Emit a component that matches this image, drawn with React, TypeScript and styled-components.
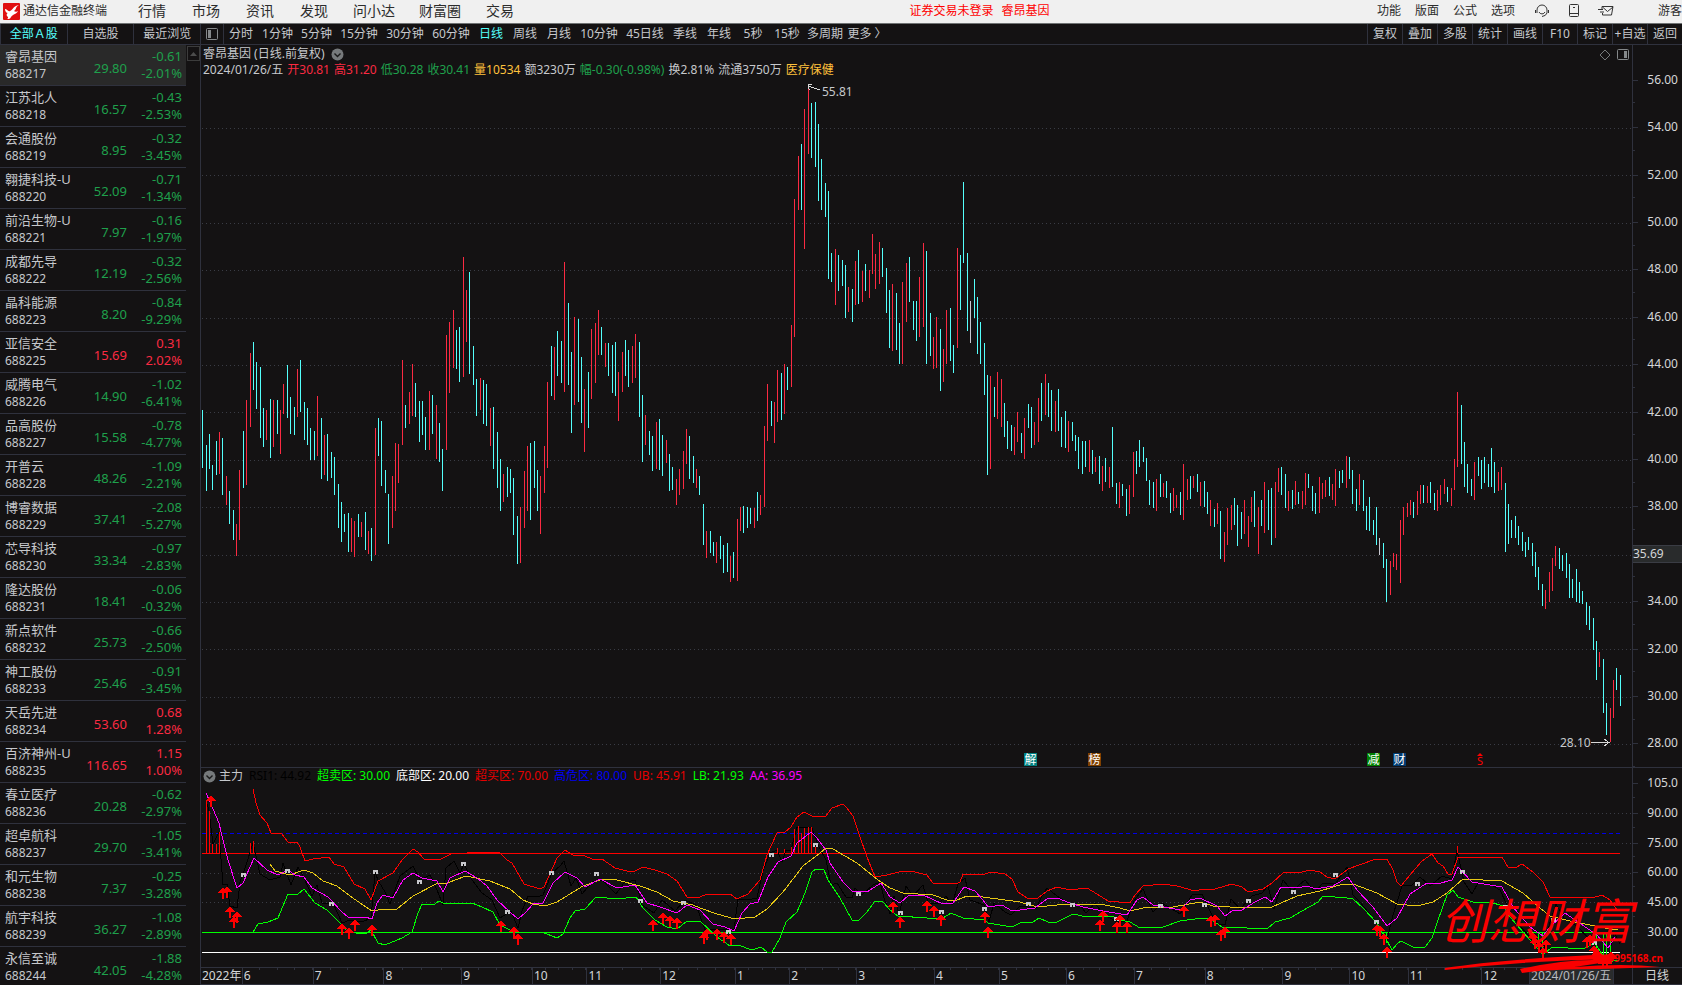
import React from "react";
import styled, { createGlobalStyle } from "styled-components";

const C = {
  bg: "#141213",
  line: "#2f313d",
  text: "#c6c8cc",
  red: "#fb2a42",
  green: "#1fa04c",
  cyan: "#54fffc",
  yellow: "#ffc13c",
};

const GlobalStyle = createGlobalStyle`
  * { box-sizing: border-box; }
  html, body { margin: 0; height: 100%; }
  body {
    overflow: hidden;
    background: ${C.bg};
    color: ${C.text};
    font: 12px/16px "Noto Sans", "Noto Sans CJK SC", sans-serif;
  }
  button {
    margin: 0; padding: 0; border: 0; background: none;
    color: inherit; font: inherit; white-space: nowrap; cursor: pointer;
  }
  svg { display: block; }
`;

const Shell = styled.div`
  display: flex;
  flex-direction: column;
  height: 100vh;
  overflow: hidden;
`;

/* ---------- top menu ---------- */
const MenuBar = styled.header`
  flex: none;
  display: flex;
  align-items: center;
  height: 24px;
  padding-bottom: 1px;
  background: #f0f0f0;
  border-bottom: 1px solid #6f7273;
  color: #2c2c2c;
`;
const Brand = styled.div`
  display: flex;
  align-items: center;
  gap: 3px;
  width: 125px;
  padding-left: 3px;
`;
const MainNav = styled.nav`
  display: flex;
  font-size: 14px;
`;
const NavItem = styled.button<{ $wide?: boolean }>`
  width: ${(p) => (p.$wide ? 66 : 54)}px;
`;
const Notice = styled.div`
  flex: 1;
  display: flex;
  justify-content: center;
  gap: 8px;
  padding-left: 62px;
  color: #ff0000;
`;
const SideNav = styled.nav`
  display: flex;
  align-items: center;
`;
const SideItem = styled.button`
  width: 38px;
`;
const IconGroup = styled.div`
  display: flex;
  margin: 0 36px 0 4px;
`;
const IconItem = styled.button`
  display: flex;
  align-items: center;
  justify-content: center;
  width: 32px;
`;

/* ---------- tool bar ---------- */
const ToolRow = styled.div`
  flex: none;
  display: flex;
  height: 21px;
  border-bottom: 1px solid ${C.line};
`;
const ListTabs = styled.div`
  display: flex;
  width: 200px;
`;
const ListTab = styled.button<{ $active?: boolean }>`
  flex: 1;
  border-left: 1px solid ${C.line};
  color: ${(p) => (p.$active ? C.cyan : "inherit")};
`;
const PaneToggle = styled.button`
  display: flex;
  align-items: center;
  justify-content: center;
  width: 24px;
  border: solid ${C.line};
  border-width: 0 1px;
`;
const Periods = styled.div`
  flex: 1;
  display: flex;
`;
const Period = styled.button<{ $w: number; $active?: boolean }>`
  width: ${(p) => p.$w}px;
  color: ${(p) => (p.$active ? C.cyan : "inherit")};
`;
const Actions = styled.div`
  display: flex;
`;
const Action = styled.button`
  width: 35px;
  border-left: 1px solid ${C.line};
`;

/* ---------- stock list ---------- */
const Body = styled.div`
  flex: 1;
  display: flex;
  min-height: 0;
`;
const ListPane = styled.aside`
  display: flex;
  align-items: flex-start;
  width: 200px;
  overflow: hidden;
`;
const Stocks = styled.table`
  width: 186px;
  border-spacing: 0;
  table-layout: fixed;
`;
const StockRow = styled.tr<{ $active?: boolean }>`
  height: 41px;
  background: ${(p) => (p.$active ? "#292929" : "transparent")};
  > * { border-bottom: 1px solid ${C.line}; }
`;
const NameCell = styled.th`
  width: 78px;
  padding: 3px 0 3px 5px;
  font-weight: 400;
  text-align: left;
  line-height: 17px;
  white-space: nowrap;
`;
const StockName = styled.div`
  font-size: 13px;
`;
const PriceCell = styled.td<{ $up?: boolean }>`
  width: 49px;
  padding: 5px 0 0;
  font-size: 13px;
  text-align: right;
  color: ${(p) => (p.$up ? C.red : C.green)};
`;
const ChangeCell = styled(PriceCell)`
  width: 59px;
  padding: 3px 4px 3px 0;
  line-height: 17px;
`;
const ScrollUp = styled.button`
  width: 13px;
  height: 15px;
  margin: 1px 0 0 1px;
  border: 1px solid #3c3c3c;
  display: flex;
  align-items: center;
  justify-content: center;
`;

/* ---------- charts ---------- */
const ChartPane = styled.main`
  position: relative;
  flex: 1;
  min-width: 0;
  display: flex;
  flex-direction: column;
  border-left: 1px solid ${C.line};
`;
const PriceBlock = styled.section`
  flex: 1;
  min-height: 0;
  display: flex;
`;
const RsiBlock = styled.section`
  flex: none;
  display: flex;
  height: 200px;
  border-top: 1px solid ${C.line};
`;
const Plot = styled.div`
  position: relative;
  flex: 1;
  min-width: 0;
  min-height: 0;
`;
const Canvas = styled.svg`
  position: absolute;
  inset: 0;
  width: 100%;
  height: 100%;
  shape-rendering: crispEdges;
`;
const Scale = styled.div<{ $top?: number; $bottom?: number }>`
  display: flex;
  flex-direction: column;
  width: 50px;
  padding: ${(p) => p.$top || 0}px 0 ${(p) => p.$bottom || 0}px;
  border-left: 1px solid ${C.line};
  color: #d4d6d8;
`;
const ScaleCell = styled.div`
  position: relative;
  flex: 1;
  display: flex;
  align-items: center;
  justify-content: flex-end;
  padding-right: 4px;
  &::before, &::after {
    content: "";
    position: absolute;
    left: 0;
    height: 1px;
    background: ${C.line};
  }
  &::before { top: 50%; width: 5px; }
  &::after { bottom: 0; width: 2px; }
`;
const Cursor = styled.div`
  position: relative;
  flex: 1;
  margin-right: -4px;
  border: solid #3a3c44;
  border-width: 1px 0;
  background: #292b2c;
  z-index: 1;
`;
const Caption = styled.div`
  position: relative;
  padding: 1px 0 0 2px;
`;
const CaptionLine = styled.div<{ $gap: number }>`
  display: flex;
  align-items: center;
  gap: ${(p) => p.$gap}px;
  white-space: nowrap;
`;
const RsiCaption = styled(Caption)`
  padding-top: 0;
`;
const Tone = styled.span<{ $c: string }>`
  color: ${(p) => p.$c};
`;
const CornerTools = styled.div`
  position: absolute;
  top: 4px;
  right: 3px;
  display: flex;
  gap: 6px;
`;
const PlotLabel = styled.span<{ $x: number; $y: number }>`
  position: absolute;
  left: ${(p) => ((p.$x - 201) / 1431) * 100}%;
  top: ${(p) => ((p.$y - 45) / 722) * 100}%;
`;
const Flag = styled.button<{ $x: number; $bg: string }>`
  position: absolute;
  bottom: 1px;
  left: ${(p) => ((p.$x - 201) / 1431) * 100}%;
  width: 13px;
  height: 13px;
  background: ${(p) => p.$bg};
  color: #fff;
  line-height: 13px;
`;
const SellFlag = styled(Flag)`
  color: #ff0000;
  font-size: 11px;
  line-height: 10px;
  width: 8px;
`;

const TimeAxis = styled.footer`
  flex: none;
  display: flex;
  height: 18px;
  border-top: 1px solid ${C.line};
  color: #d4d6d8;
`;
const Months = styled.div`
  flex: 1;
  display: flex;
  min-width: 0;
  height: 17px;
  border-bottom: 1px solid ${C.line};
`;
const Month = styled.div<{ $span: number; $first?: boolean }>`
  flex: ${(p) => p.$span} ${(p) => p.$span} 0;
  min-width: 0;
  padding-left: 1px;
  border-left: ${(p) => (p.$first ? 0 : 1)}px solid ${C.line};
  white-space: nowrap;
  background: ${(p) =>
    p.$span > 45 && p.$span < 80
      ? `repeating-linear-gradient(90deg, transparent 0, transparent calc(25% - 1px), ${C.line} calc(25% - 1px), ${C.line} 25%) top / 100% 2px no-repeat`
      : "none"};
`;
const Today = styled(Month)`
  background: #292b2c;
  color: #b9bcc0;
`;
const PeriodName = styled.div`
  width: 50px;
  height: 17px;
  padding-left: 12px;
  border-left: 1px solid ${C.line};
  border-bottom: 1px solid ${C.line};
`;

const Watermark = styled.div`
  position: absolute;
  right: 0;
  bottom: 6px;
  width: 240px;
  color: #fb0000;
  pointer-events: none;
`;
const WatermarkName = styled.div`
  margin-left: -2px;
  padding-bottom: 27px;
  font: italic 400 48px/68px "Noto Sans CJK SC", sans-serif;
  white-space: nowrap;
`;
const WatermarkSite = styled.div`
  position: absolute;
  right: 19px;
  bottom: 15px;
  font-weight: 700;
  font-size: 10px;
  line-height: 12px;
`;
const Swoosh = styled.svg`
  position: absolute;
  left: 0;
  bottom: 0;
`;

/* ---------- data ---------- */
const periods: [string, number][] = [
  ["分时", 34], ["1分钟", 39], ["5分钟", 39], ["15分钟", 46], ["30分钟", 46], ["60分钟", 46],
  ["日线", 34], ["周线", 34], ["月线", 34], ["10分钟", 46], ["45日线", 46], ["季线", 34],
  ["年线", 34], ["5秒", 34], ["15秒", 34], ["多周期", 42], ["更多 〉", 42],
];
const actions = ["复权", "叠加", "多股", "统计", "画线", "F10", "标记", "+自选", "返回"];

const stocks = `睿昂基因 688217 29.80 -0.61 -2.01%
江苏北人 688218 16.57 -0.43 -2.53%
会通股份 688219 8.95 -0.32 -3.45%
翱捷科技-U 688220 52.09 -0.71 -1.34%
前沿生物-U 688221 7.97 -0.16 -1.97%
成都先导 688222 12.19 -0.32 -2.56%
晶科能源 688223 8.20 -0.84 -9.29%
亚信安全 688225 15.69 0.31 2.02%
威腾电气 688226 14.90 -1.02 -6.41%
品高股份 688227 15.58 -0.78 -4.77%
开普云 688228 48.26 -1.09 -2.21%
博睿数据 688229 37.41 -2.08 -5.27%
芯导科技 688230 33.34 -0.97 -2.83%
隆达股份 688231 18.41 -0.06 -0.32%
新点软件 688232 25.73 -0.66 -2.50%
神工股份 688233 25.46 -0.91 -3.45%
天岳先进 688234 53.60 0.68 1.28%
百济神州-U 688235 116.65 1.15 1.00%
春立医疗 688236 20.28 -0.62 -2.97%
超卓航科 688237 29.70 -1.05 -3.41%
和元生物 688238 7.37 -0.25 -3.28%
航宇科技 688239 36.27 -1.08 -2.89%
永信至诚 688244 42.05 -1.88 -4.28%`
  .split("\n")
  .map((row) => row.split(" "));

// One entry per trading day: x, direction (c down, r up, w flat), high-low.
const bars = `202c410-468 206c445-491 209c434-469 212c465-490 216c441-475 219r432-474 222c438-495 226r476-505 229c491-524 233c510-540 236r524-556 239r470-540 243c431-488 246r400-485 250r353-427 253c342-390 256c362-409 260c367-438 263c408-447 266r410-440 270c399-458 273r400-447 277c400-434 280r410-454 283r384-414 287c365-418 290c397-434 294c407-435 297r369-417 300c360-412 304c402-440 307c408-445 310c428-460 314c431-460 317r396-456 321c418-479 324r435-475 327c434-481 331c452-478 334c457-495 338c484-528 341c502-542 344c514-532 348c513-552 351r518-552 354r521-557 358c514-537 361r522-537 365c512-550 368r531-554 371c528-561 375r428-555 378c418-456 381c421-486 385c470-493 388c494-544 392r476-528 395r443-511 398r444-483 402r360-445 405c405-428 409r392-424 412r364-416 415c383-417 419c401-442 422c401-435 425c417-450 429r391-450 432c395-434 436r405-459 439c423-462 442c449-491
446r335-450 449r322-393 453r310-368 456c330-369 459c327-382 463r257-377 466r290-342 469c272-374 473c346-385 476c379-416 480r378-410 483c380-424 486c384-426 490r408-446 493c407-469 497c432-488 500c459-511 503r474-502 507c467-497 510c469-493 513c478-535 517c516-564 520r507-563 524r471-528 527r446-511 530c443-520 534c441-488 537c470-511 540r476-534 544r446-493 547r382-468 551c346-396 554r347-400 557c331-376 561c341-383 564r262-392 568c303-385 571c352-433 574r317-405 578c319-402 581c357-423 584r389-452 588c372-428 591r329-399 595r323-383 598r310-355 601c327-355 605r343-367 608c343-376 612c345-393 615c342-396 618r372-421 622r352-392 625c340-376 628c350-387 632r346-383 635r334-378 639c342-417 642c395-462 645r415-445 649c431-455 652c436-471 656r422-469 659c419-470 662c435-476 666r440-463 669c454-491 672c467-490 676r479-505 679r469-495 683r451-489 686r429-464 689c436-479 693c456-483 696r469-488 699c476-495 703c504-545 706r531-558 710c531-553 713c542-556 716r542-563 720c536-559 723c545-573 727c543-572 730r556-582 733c552-578 737r519-581 740r507-531 743c506-533 747c507-528 750c508-524 754r508-528 757c492-521 760r495-515 764r426-507 767r384-441 771c401-426 774r402-443 777r370-422 781c373-420 784r364-414 787c367-390
791r325-387 794r199-337 798r156-210 801c144-210 804r109-249 808r87-154 811c103-158 815c102-167 818c124-201 821c159-210 825c183-217 828c191-279 831c253-282 835r249-305 838c255-291 842c260-286 845c265-318 848r287-312 852c289-322 855r261-305 858c250-304 862r271-302 865c264-291 869r270-298 872r234-274 875r254-289 879r242-284 882c248-277 886c268-313 889c290-348 892r284-351 896c293-350 899c323-364 902r282-364 906r263-322 909c257-302 913c301-330 916c301-341 919r277-337 923r243-327 926c251-364 930c313-356 933r337-369 936r317-368 940c329-391 943r349-382 946r310-364 950c308-361 953c345-373 957r248-348 960c255-310 963c182-263 967c253-331 970w301-343 974c279-318 977c297-354 980c322-364 984c343-395 987c375-475 990r376-469 994c387-417 997r372-419 1001r379-427 1004c403-437 1007c421-449 1011c425-451 1014r427-455 1017r412-442 1021c433-453 1024r418-459 1028c404-428 1031c407-448 1034r422-445 1038r398-442 1041c383-421 1045r374-415 1048c383-417 1051c390-431 1055r401-432 1058c389-431 1061c417-447 1065c411-448 1068r421-452 1072c422-441 1075c435-451 1078c437-469 1082c441-474 1085c441-467 1089r440-472 1092c450-474 1095r457-472
1099c456-484 1102r466-491 1105c458-482 1109r467-488 1112c427-487 1116c483-504 1119r482-508 1122c484-496 1126c489-516 1129r485-514 1133r452-497 1136c451-474 1139c440-467 1143c447-462 1146c458-481 1149c480-505 1153c482-508 1156r479-511 1160c474-497 1163r483-497 1166c481-498 1170c493-513 1173r488-511 1176r495-508 1180c492-515 1183r464-520 1187r479-500 1190c476-499 1193r476-488 1197c474-492 1200r482-506 1204c481-507 1207c492-514 1210r500-526 1214c509-527 1217r503-524 1220c511-559 1224r532-562 1227r508-545 1231r505-530 1234c498-525 1237c505-546 1241c512-539 1244r500-534 1248r516-547 1251r497-522 1254c491-527 1258r507-554 1261c500-526 1264r482-533 1268c490-530 1271c488-545 1275r482-538 1278r468-492 1281c467-495 1285c474-508 1288r491-511 1292c490-509 1295r481-505 1298c492-504 1302r491-509 1305r473-505 1308c474-488 1312c486-511 1315c493-514 1319r477-513 1322r483-499 1325r480-497 1329c477-496 1332r484-500 1335r469-506 1339c471-488 1342c470-483 1346r456-488 1349c457-479 1352c470-504 1356c489-511 1359r474-505 1363c480-511 1366c506-530 1369c497-531
1373c520-535 1376c507-545 1379w538-555 1383c543-568 1386c559-602 1390r561-595 1393r553-567 1396r554-570 1400r520-583 1403r507-535 1407r503-517 1410r500-515 1413c502-518 1417r491-515 1420r485-504 1423c485-503 1427r486-503 1430c482-503 1434c493-510 1437r490-511 1440r485-505 1444r479-494 1447c487-502 1451r488-506 1454r459-490 1457r392-467 1461c405-464 1464c442-487 1467c464-493 1471c479-496 1474r462-500 1478c457-476 1481c460-489 1484c457-483 1488c464-487 1491c448-487 1494c462-493 1498r472-491 1501r467-490 1505c483-552 1508c504-544 1511c520-538 1515c516-538 1518c526-545 1522c532-551 1525c542-557 1528c537-550 1532c543-566 1535c552-577 1538c567-590 1542c584-606 1545r590-609 1549r572-602 1552r558-591 1555r546-566 1559c548-569 1562c555-571 1566c553-578 1569c564-598 1572c579-598 1576c569-602 1579c582-603 1582c591-604 1586c602-625 1589c606-630 1593c618-650 1596c641-680 1599r652-667 1603c659-713 1606c703-735 1610r708-742 1613r680-718 1616c668-690 1620c675-706`
  .split(/\s+/)
  .map((s) => s.match(/(\d+)([crw])(\d+)-(\d+)/) as RegExpMatchArray);

const barPath = (kind: string) =>
  bars.filter((b) => b[2] === kind).map((b) => `M${b[1]}.5 ${b[3]}V${b[4]}`).join("");

const priceGrid = [128, 175, 223, 270, 318, 365, 412, 460, 507, 555, 602, 649, 697, 744];
const rsiGrid = [813, 843, 873, 902];

const upperBand = "253,789 256,803 260,815 267,823 271,833 281,833 288,842 297,842 300,847 305,861 313,859 329,857 334,864 344,867 354,884 365,889 371,900 378,881 393,873 402,860 413,849 418,852 424,859 439,860 453,853 467,853 499,852 507,860 512,863 524,884 540,889 544,887 557,858 565,850 573,855 585,856 592,859 602,859 615,868 627,871 635,871 643,867 655,870 667,874 677,881 687,897 700,897 707,894 730,894 737,899 748,894 760,880 767,855 777,833 785,832 791,827 797,817 804,812 812,816 826,816 832,808 843,804 847,808 853,816 860,837 867,857 875,877 887,875 903,871 915,872 927,875 933,883 947,883 956,884 960,882 963,874 983,875 990,872 1005,874 1012,879 1018,892 1027,898 1038,898 1047,891 1057,887 1070,890 1087,888 1097,894 1108,901 1130,903 1135,895 1143,886 1163,884 1177,886 1195,891 1203,889 1215,889 1232,884 1242,887 1248,892 1263,889 1272,883 1283,873 1302,872 1310,870 1320,872 1327,877 1335,879 1348,869 1373,860 1387,859 1393,870 1397,882 1401,886 1410,875 1422,861 1432,854 1438,863 1443,866 1448,874 1452,874 1458,857 1502,857 1508,867 1517,867 1522,864 1533,872 1543,882 1550,897 1580,897 1592,898 1602,895 1610,900 1617,910";
const midBand = "270,864 275,871 290,875 304,870 313,873 323,881 337,886 350,896 363,905 372,911 385,909 397,909 413,896 438,883 447,883 466,876 490,881 510,889 523,900 533,904 545,906 557,902 583,886 603,879 617,880 640,886 657,892 673,901 693,905 700,908 717,914 735,919 755,917 767,909 783,892 803,866 820,853 826,848 833,849 857,863 878,880 890,888 903,893 933,895 947,900 957,900 967,896 983,897 1020,902 1037,907 1067,904 1100,904 1120,908 1130,911 1143,908 1173,907 1200,902 1213,906 1230,907 1272,907 1297,896 1320,891 1343,884 1353,884 1377,893 1397,904 1417,906 1433,902 1447,893 1463,879 1502,881 1523,893 1540,908 1550,916 1570,921 1590,925 1610,929 1618,929";
const lowerBand = "253,932 258,924 268,922 278,918 288,894 298,894 304,889 315,903 327,910 340,923 348,932 365,934 371,930 378,943 385,945 402,938 412,932 418,913 422,904 435,904 439,901 443,903 472,903 482,907 493,912 500,925 508,929 517,933 542,932 557,938 563,934 570,918 575,911 585,909 596,897 617,899 636,897 643,908 655,920 667,927 677,929 687,921 700,921 717,937 730,946 738,945 752,950 761,947 767,952 772,952 780,938 786,922 797,912 805,893 812,872 816,869 824,870 828,880 840,898 852,920 858,921 867,912 875,901 883,902 890,910 898,916 927,918 943,918 951,913 963,918 985,920 988,923 1012,927 1022,922 1033,922 1039,918 1048,922 1057,922 1073,914 1087,917 1112,916 1120,920 1130,922 1140,928 1163,927 1180,921 1195,919 1205,918 1212,920 1222,927 1247,928 1267,929 1275,922 1290,918 1302,911 1318,902 1323,896 1347,898 1353,899 1363,908 1377,923 1385,937 1392,950 1397,944 1401,941 1413,947 1425,947 1432,938 1437,923 1447,895 1453,890 1458,897 1473,902 1490,902 1503,906 1510,917 1530,940 1543,955 1552,947 1583,949 1595,943 1607,962 1619,960";
const average = "206,793 210,802 219,823 221,832 228,860 237,888 243,883 254,858 267,870 278,875 288,870 295,875 304,877 312,888 328,897 342,912 348,917 365,917 372,919 377,903 383,895 393,898 403,880 413,873 422,878 437,881 443,892 450,878 465,871 477,878 487,886 497,900 510,912 518,919 525,913 533,904 543,903 553,883 565,872 577,878 585,887 600,879 617,888 635,885 647,903 660,907 677,913 687,905 700,910 713,924 725,927 734,931 742,913 750,904 758,902 768,877 778,862 791,856 797,843 811,832 817,838 826,850 830,863 843,882 852,891 867,892 881,883 890,897 900,903 908,896 923,895 943,904 953,903 964,887 975,891 983,900 988,907 1002,905 1012,911 1035,908 1048,898 1057,898 1070,903 1083,907 1103,911 1127,915 1137,900 1143,897 1153,905 1180,910 1190,900 1200,898 1217,906 1225,916 1232,911 1242,910 1255,902 1265,897 1272,902 1281,887 1297,888 1308,886 1315,889 1333,886 1348,877 1357,890 1373,907 1387,926 1397,918 1410,894 1427,883 1437,884 1452,880 1458,867 1472,882 1502,887 1513,907 1530,927 1543,936 1550,927 1565,913 1578,922 1597,935 1608,948 1615,937";
const rsi = "206,800 209,811 213,844 219,832 223,885 227,884 230,906 237,908 240,882 246,865 253,843 260,874 270,880 280,877 283,863 291,885 298,867 304,878 312,896 317,885 322,903 333,903 342,923 350,920 362,922 371,918 375,873 379,882 385,892 390,904 400,876 408,870 413,866 420,880 430,875 437,890 443,905 446,868 454,861 460,873 464,864 472,880 482,893 492,900 500,918 511,911 518,928 522,911 528,896 537,897 543,895 552,873 560,866 564,861 571,886 576,878 582,894 592,882 602,880 616,894 624,883 635,880 642,905 654,913 662,900 675,911 685,900 696,905 705,930 722,929 734,930 738,899 748,900 757,898 763,871 770,853 777,850 782,862 786,850 791,850 797,827 812,828 818,845 826,860 831,885 837,883 846,897 852,898 855,888 862,895 873,885 880,882 884,898 890,914 894,896 899,914 906,886 913,896 923,885 928,903 938,904 946,896 952,905 958,884 965,878 970,900 984,905 989,922 994,903 1005,912 1011,915 1020,906 1036,908 1042,896 1047,888 1057,896 1068,903 1080,905 1086,913 1095,903 1103,914 1117,922 1127,921 1134,901 1143,889 1153,912 1162,903 1180,914 1192,895 1202,894 1212,915 1218,924 1225,925 1231,899 1240,909 1252,896 1262,893 1268,886 1274,909 1283,880 1292,891 1305,880 1315,892 1322,884 1336,883 1347,867 1353,895 1360,902 1368,912 1377,924 1387,940 1393,915 1402,886 1412,885 1420,877 1430,886 1442,876 1452,879 1457,850 1464,882 1472,894 1478,883 1490,884 1500,890 1508,907 1518,924 1530,937 1543,952 1550,922 1556,904 1564,918 1578,927 1590,940 1598,952 1608,960 1614,932 1620,944";

const overbought: [number, number][] = [[206, 800], [209, 811], [212, 844], [216, 844], [219, 832], [250, 843], [253, 841], [777, 848], [784, 849], [791, 847], [794, 829], [798, 826], [801, 833], [804, 828], [808, 827], [811, 827], [815, 847], [1457, 846]];
const oversold: [number, number][] = [[1386, 943], [1538, 950], [1542, 957], [1593, 945], [1596, 955], [1603, 958], [1606, 962], [1610, 955]];
const arrows: [number, number][] = [[211, 795], [223, 887], [227, 886], [230, 906], [234, 916], [237, 911], [342, 923], [349, 927], [355, 919], [372, 924], [501, 920], [514, 926], [518, 933], [653, 919], [663, 912], [670, 915], [677, 917], [704, 932], [707, 928], [717, 928], [724, 931], [731, 933], [893, 901], [900, 916], [927, 900], [934, 905], [941, 914], [985, 911], [988, 926], [1100, 919], [1103, 910], [1117, 921], [1120, 914], [1127, 921], [1184, 905], [1211, 915], [1215, 914], [1221, 929], [1225, 926], [1377, 924], [1380, 925], [1384, 933], [1387, 946], [1533, 932], [1535, 937], [1539, 941], [1543, 947], [1546, 939], [1587, 936], [1590, 934], [1594, 945], [1597, 949], [1603, 958], [1607, 958], [1611, 951]];
const marks: [number, number][] = [[243, 875], [287, 871], [331, 904], [375, 872], [419, 882], [463, 864], [507, 912], [551, 873], [596, 874], [640, 901], [683, 903], [728, 932], [771, 855], [815, 845], [858, 894], [900, 913], [941, 912], [984, 909], [1028, 904], [1072, 905], [1116, 919], [1160, 906], [1204, 905], [1248, 901], [1293, 892], [1335, 875], [1376, 922], [1417, 884], [1462, 872], [1505, 907], [1553, 920], [1594, 943]];

const priceScale = ["56.00", "54.00", "52.00", "50.00", "48.00", "46.00", "44.00", "42.00", "40.00", "38.00", "cursor", "34.00", "32.00", "30.00", "28.00"];
const rsiScale = ["105.0", "90.00", "75.00", "60.00", "45.00", "30.00"];
const months: [string, number][] = [["6", 71], ["7", 71], ["8", 78], ["9", 71], ["10", 54], ["11", 74], ["12", 75], ["1", 54], ["2", 67], ["3", 78], ["4", 65], ["5", 67], ["6", 68], ["7", 71], ["8", 78], ["9", 67], ["10", 58], ["11", 74], ["12", 47]];

const ExpandDot = () => (
  <svg width="13" height="13" viewBox="0 0 13 13" aria-hidden="true">
    <circle cx="6.5" cy="6.5" r="6" fill="#76797b" />
    <path d="M3.5 5.5l3 3 3-3" fill="none" stroke="#1a1a1a" strokeWidth="1.4" />
  </svg>
);

const Logo = () => (
  <svg width="17" height="17" viewBox="0 0 17 17" aria-hidden="true">
    <rect width="17" height="17" rx="1" fill="#e00f10" />
    <path d="M2 6c2 0 3 3 5 2 3-1 3-5 9-6-4 2-2 4-5 6 1 1 3 1 4 0-1 3-5 3-7 6-1 2-2 2-4 2 2-1 1-2 0-3s0-3 1-3C3 10 2 8 2 6z" fill="#fff" />
  </svg>
);

function StockList() {
  return (
    <ListPane>
      <Stocks>
        <tbody>
          {stocks.map(([name, code, price, diff, pct], i) => {
            const up = !diff.startsWith("-");
            return (
              <StockRow key={code} $active={i === 0}>
                <NameCell scope="row">
                  <StockName>{name}</StockName>
                  <div>{code}</div>
                </NameCell>
                <PriceCell $up={up}>{price}</PriceCell>
                <ChangeCell $up={up}>
                  <div>{diff}</div>
                  <div>{pct}</div>
                </ChangeCell>
              </StockRow>
            );
          })}
        </tbody>
      </Stocks>
      <ScrollUp aria-label="向上滚动">
        <svg width="7" height="4" viewBox="0 0 7 4"><path d="M0 4l3.5-4L7 4z" fill="#4c4c4c" /></svg>
      </ScrollUp>
    </ListPane>
  );
}

function PriceChart() {
  return (
    <PriceBlock>
      <Plot>
        <Canvas viewBox="201 45 1431 722" preserveAspectRatio="none">
          {priceGrid.map((y) => (
            <path key={y} d={`M202 ${y}.5H1631`} stroke="#3a3c45" strokeDasharray="1 3" />
          ))}
          <path d={barPath("c")} stroke={C.cyan} />
          <path d={barPath("r")} stroke={C.red} />
          <path d={barPath("w")} stroke="#c8c8d0" />
          <g fill="none" stroke="#d8d8d8">
            <path d="M808 86l12 4M808 84.500h4M808 84v4l2 2" />
            <path d="M1591 742.500h18M1604 739l5 3.500-5 3.500" />
          </g>
        </Canvas>
        <Caption>
          <CaptionLine $gap={6}>
            <span>睿昂基因 (日线.前复权)</span>
            <ExpandDot />
          </CaptionLine>
          <CaptionLine $gap={4}>
            <span>2024/01/26/五</span>
            <Tone $c={C.red}>开30.81</Tone>
            <Tone $c={C.red}>高31.20</Tone>
            <Tone $c={C.green}>低30.28</Tone>
            <Tone $c={C.green}>收30.41</Tone>
            <Tone $c={C.yellow}>量10534</Tone>
            <span>额3230万</span>
            <Tone $c={C.green}>幅-0.30(-0.98%)</Tone>
            <span>换2.81%</span>
            <span>流通3750万</span>
            <Tone $c={C.yellow}>医疗保健</Tone>
          </CaptionLine>
        </Caption>
        <CornerTools>
          <button aria-label="标记">
            <svg width="12" height="12" viewBox="0 0 12 12"><path d="M6 1l5 5-5 5-5-5z" fill="none" stroke="#76797b" /></svg>
          </button>
          <button aria-label="侧栏">
            <svg width="12" height="12" viewBox="0 0 12 12">
              <rect x=".5" y=".5" width="11" height="10" rx="1" fill="none" stroke="#85888a" />
              <rect x="7" y="2" width="3" height="7" fill="#85888a" />
            </svg>
          </button>
        </CornerTools>
        <PlotLabel $x={822} $y={84}>55.81</PlotLabel>
        <PlotLabel $x={1560} $y={735}>28.10</PlotLabel>
        <Flag $x={1024} $bg="#008080">解</Flag>
        <Flag $x={1088} $bg="#804000">榜</Flag>
        <Flag $x={1367} $bg="#008000">减</Flag>
        <Flag $x={1393} $bg="#003a70">财</Flag>
        <SellFlag $x={1476} $bg="transparent">
          <svg width="8" height="3" viewBox="0 0 8 3"><path d="M4 0l3 3H1z" fill="#f00" /></svg>
          S
        </SellFlag>
      </Plot>
      <Scale $top={11}>
        {priceScale.map((v) => (
          <ScaleCell key={v}>{v === "cursor" ? <Cursor>35.69</Cursor> : v}</ScaleCell>
        ))}
      </Scale>
    </PriceBlock>
  );
}

function RsiChart() {
  return (
    <RsiBlock>
      <Plot>
        <Canvas viewBox="201 768 1431 199" preserveAspectRatio="none">
          {rsiGrid.map((y) => (
            <path key={y} d={`M202 ${y}.5H1631`} stroke="#3a3c45" strokeDasharray="1 3" />
          ))}
          <path d="M202 833.500H1620" stroke="#0000e8" strokeDasharray="4 3" />
          <path d="M202 853.500H1620" stroke="#ff0000" />
          <path d="M202 932.500H1620" stroke="#00ff00" />
          <path d="M202 952.500H1620" stroke="#ffffff" />
          <g fill="none">
            <polyline points={rsi} stroke="#000" />
            <polyline points={upperBand} stroke="#ff0000" />
            <polyline points={midBand} stroke="#e8c814" />
            <polyline points={lowerBand} stroke="#00ff00" />
            <path d={overbought.map(([x, y]) => `M${x}.5 ${y}V853`).join("")} stroke="#ff0000" />
            <path d={oversold.map(([x, y]) => `M${x}.5 932V${y}`).join("")} stroke="#00ff00" />
            <polyline points={average} stroke="#ff00ff" />
          </g>
          <path d={marks.map(([x, y]) => `M${x - 2} ${y + 2}v-4h5v4h-2v-2h-1v2z`).join("")} fill="#c8c8cc" />
          <path d={arrows.map(([x, y]) => `M${x} ${y}l5 6h-4v6h-2v-6h-4z`).join("")} fill="#ff0000" />
        </Canvas>
        <RsiCaption>
          <CaptionLine $gap={6}>
            <CaptionLine $gap={3}>
              <ExpandDot />
              <span>主力</span>
            </CaptionLine>
            <Tone $c="#000">RSI1: 44.92</Tone>
            <Tone $c="#00ff00">超卖区: 30.00</Tone>
            <Tone $c="#ffffff">底部区: 20.00</Tone>
            <Tone $c="#e60000">超买区: 70.00</Tone>
            <Tone $c="#0000f0">高危区: 80.00</Tone>
            <Tone $c="#e60000">UB: 45.91</Tone>
            <Tone $c="#00ff00">LB: 21.93</Tone>
            <Tone $c="#ff00ff">AA: 36.95</Tone>
          </CaptionLine>
        </RsiCaption>
      </Plot>
      <Scale $bottom={20}>
        {rsiScale.map((v) => <ScaleCell key={v}>{v}</ScaleCell>)}
      </Scale>
    </RsiBlock>
  );
}

export default function App() {
  return (
    <Shell>
      <GlobalStyle />
      <MenuBar>
        <Brand><Logo /><span>通达信金融终端</span></Brand>
        <MainNav>
          {["行情", "市场", "资讯", "发现", "问小达", "财富圈", "交易"].map((t) => (
            <NavItem key={t} $wide={t.length > 2}>{t}</NavItem>
          ))}
        </MainNav>
        <Notice><span>证券交易未登录</span><span>睿昂基因</span></Notice>
        <SideNav>
          {["功能", "版面", "公式", "选项"].map((t) => <SideItem key={t}>{t}</SideItem>)}
          <IconGroup>
            <IconItem aria-label="客服">
              <svg width="16" height="14" viewBox="0 0 16 14" fill="none" stroke="#333">
                <path d="M3 9V6a5 5 0 0 1 10 0v3M5 8a3.300 3.300 0 0 0 6 0M13 9q-1 3-5 3.500" />
                <path d="M1.500 6v3M14.500 6v3" />
              </svg>
            </IconItem>
            <IconItem aria-label="手机">
              <svg width="10" height="14" viewBox="0 0 10 14" fill="none" stroke="#333">
                <rect x=".5" y=".5" width="9" height="12" rx="1" />
                <path d="M1 9.500h8M4 3.500h2" />
              </svg>
            </IconItem>
            <IconItem aria-label="邮件">
              <svg width="16" height="12" viewBox="0 0 16 12" fill="none" stroke="#333">
                <path d="M4 4V1.500h11L13.500 10H4.500V8M4.500 2l5 4.500L15 2M0 4.500h5M2 7h4" />
              </svg>
            </IconItem>
          </IconGroup>
          <button>游客</button>
        </SideNav>
      </MenuBar>
      <ToolRow>
        <ListTabs>
          <ListTab $active>全部Ａ股</ListTab>
          <ListTab>自选股</ListTab>
          <ListTab>最近浏览</ListTab>
        </ListTabs>
        <PaneToggle aria-label="切换侧栏">
          <svg width="12" height="12" viewBox="0 0 12 12">
            <rect x=".5" y=".5" width="11" height="11" rx="1" fill="none" stroke="#85888a" />
            <rect x="2" y="2" width="3" height="8" fill="#85888a" />
          </svg>
        </PaneToggle>
        <Periods>
          {periods.map(([t, w]) => <Period key={t} $w={w} $active={t === "日线"}>{t}</Period>)}
        </Periods>
        <Actions>
          {actions.map((t) => <Action key={t}>{t}</Action>)}
        </Actions>
      </ToolRow>
      <Body>
        <StockList />
        <ChartPane>
          <PriceChart />
          <RsiChart />
          <TimeAxis>
            <Months>
              <Month $span={41} $first>2022年</Month>
              {months.map(([t, s], i) => <Month key={i} $span={s}>{t}</Month>)}
              <Today $span={84}>2024/01/26/五</Today>
              <Month $span={18} />
            </Months>
            <PeriodName>日线</PeriodName>
          </TimeAxis>
          <Watermark>
            <WatermarkName>创想财富</WatermarkName>
            <Swoosh width="240" height="26" viewBox="0 0 240 26" aria-hidden="true">
              <path d="M3 15Q60 6 172 1l4 5Q90 7 3 17zM78 16Q120 7 150 7l22-3v4l-40 6q50-4 86 0l-60 2q-50 0-78 4z" fill="#fb0000" />
            </Swoosh>
            <WatermarkSite>995168.cn</WatermarkSite>
          </Watermark>
        </ChartPane>
      </Body>
    </Shell>
  );
}
